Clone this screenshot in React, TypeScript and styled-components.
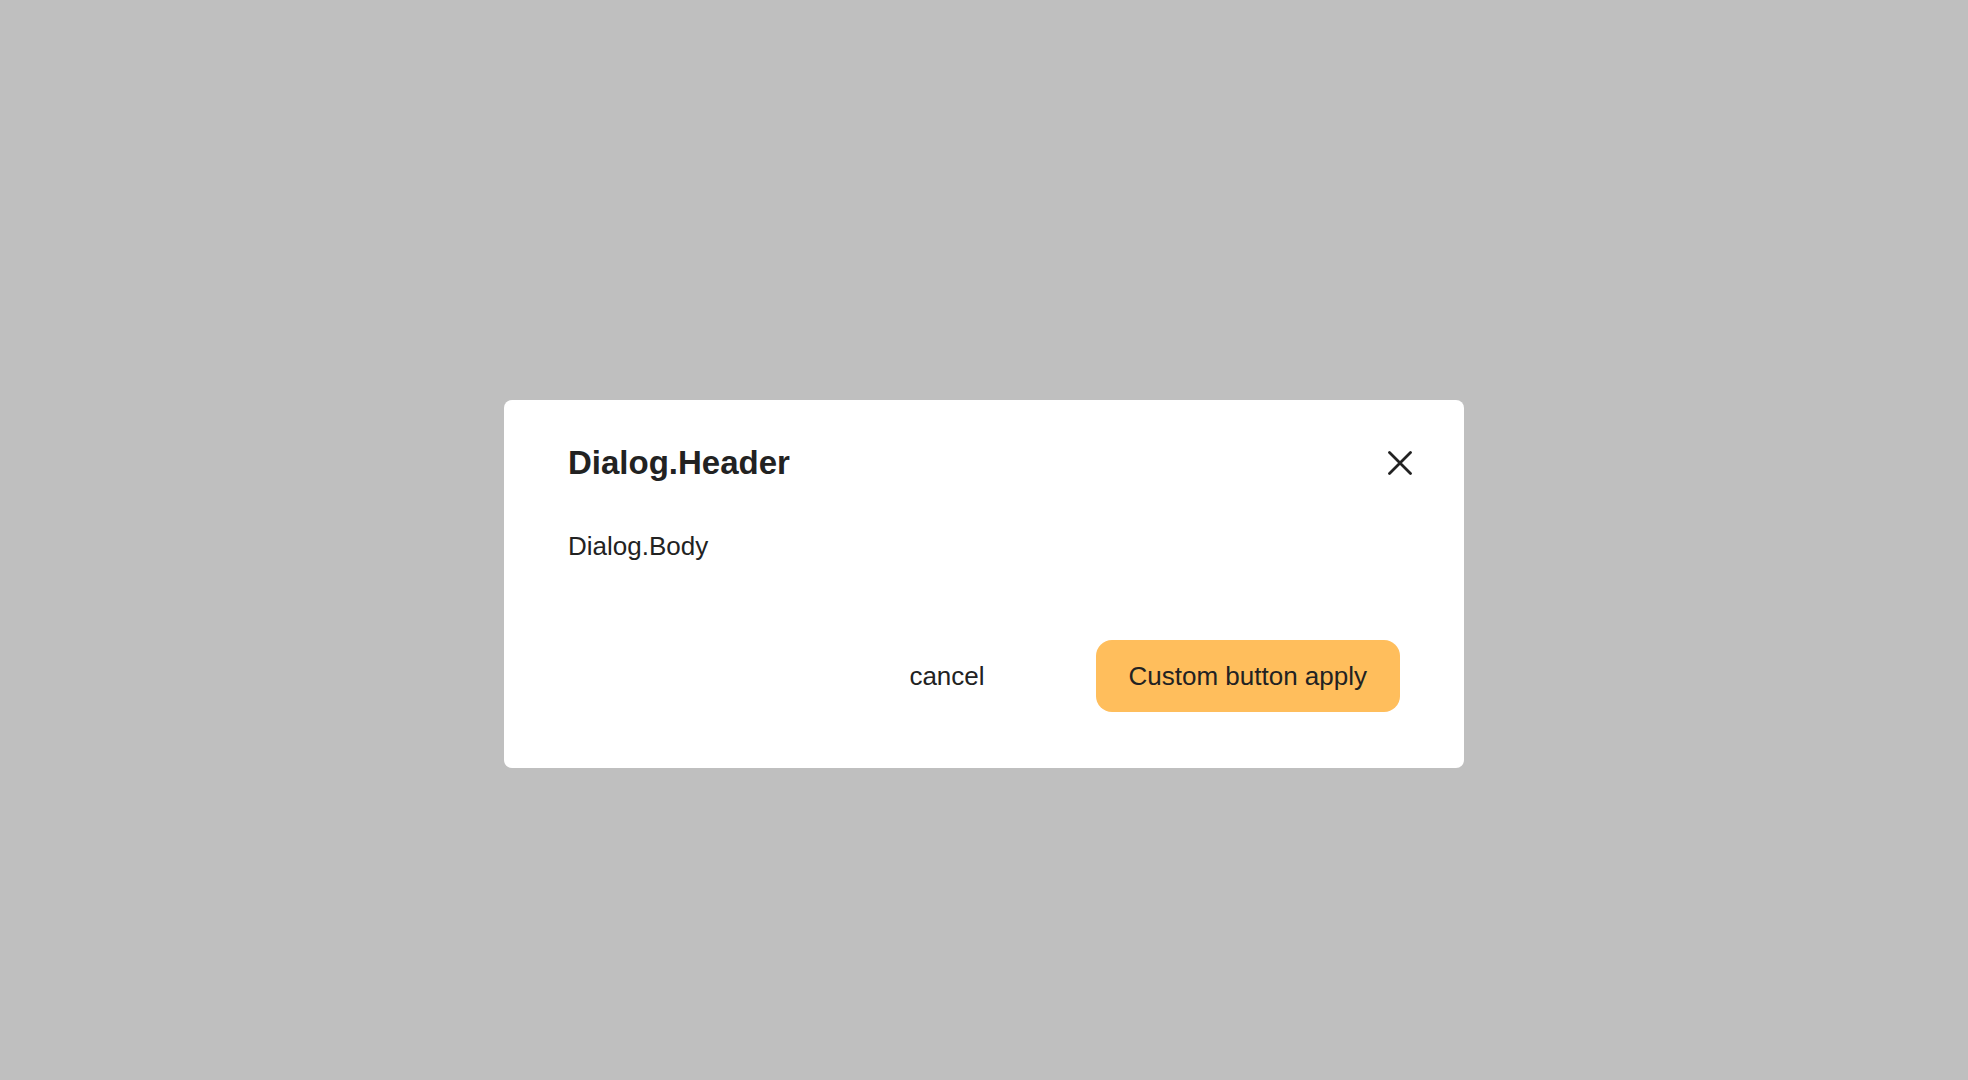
import styled, { createGlobalStyle } from 'styled-components';

const GlobalStyle = createGlobalStyle`
  html, body {
    margin: 0;
    padding: 0;
  }

  body {
    font-family: 'Liberation Sans', Arial, sans-serif;
    color: #222;
  }

  * {
    box-sizing: border-box;
  }
`;

const Overlay = styled.div`
  min-height: 100vh;
  background: #bfbfbf;
  display: flex;
  justify-content: center;
  align-items: flex-start;
  padding-top: 400px;
`;

const DialogBox = styled.div`
  width: 960px;
  background: #fff;
  border-radius: 8px;
  padding: 44px 64px 56px;
`;

const Header = styled.div`
  display: flex;
  align-items: center;
  justify-content: space-between;
`;

const Title = styled.h2`
  margin: 0;
  font-size: 33px;
  line-height: 38px;
  font-weight: 700;
  color: #222;
`;

const CloseButton = styled.button`
  width: 24px;
  height: 24px;
  margin-right: -12px;
  padding: 0;
  border: none;
  background: transparent;
  display: flex;
  align-items: center;
  justify-content: center;
  cursor: pointer;
  color: #222;
`;

const Body = styled.div`
  margin-top: 50px;
  font-size: 26px;
  line-height: 29px;
`;

const Footer = styled.div`
  margin-top: 79px;
  display: flex;
  justify-content: flex-end;
  gap: 78px;
`;

const Button = styled.button<{ $primary?: boolean }>`
  height: 72px;
  padding: 0 33px;
  border: none;
  border-radius: 16px;
  font-family: 'Liberation Sans', Arial, sans-serif;
  font-size: 26px;
  color: #222;
  background: ${props => props.$primary ? '#ffbe5c' : 'transparent'};
  cursor: pointer;
`;

const App = () => {
  return (
    <>
      <GlobalStyle />
      <Overlay>
        <DialogBox>
          <Header>
            <Title>Dialog.Header</Title>
            <CloseButton aria-label="close">
              <svg width="24" height="24" viewBox="0 0 24 24">
                <path d="M1.5 1.5 L22.5 22.5 M22.5 1.5 L1.5 22.5" stroke="currentColor" strokeWidth="2.8" strokeLinecap="round" />
              </svg>
            </CloseButton>
          </Header>
          <Body>Dialog.Body</Body>
          <Footer>
            <Button>cancel</Button>
            <Button $primary>Custom button apply</Button>
          </Footer>
        </DialogBox>
      </Overlay>
    </>
  );
};

export default App;
